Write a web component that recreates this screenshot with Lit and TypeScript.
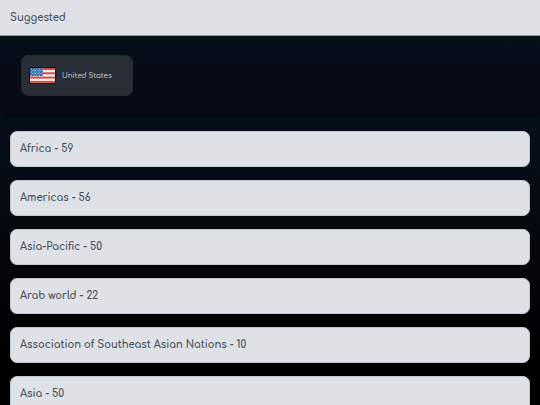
import { LitElement, html, svg, css } from "lit";
import { customElement, property } from "lit/decorators.js";

@customElement("us-flag")
class UsFlag extends LitElement {
  static styles = css`
    :host {
      display: flex;
    }
    .flag {
      display: block;
      width: 27px;
      height: 17px;
    }
  `;

  render() {
    const stripes = [0, 2, 4, 6];
    const stars = [];
    for (let row = 0; row < 5; row++) {
      const shift = row % 2;
      for (let col = 0; col < 5 - shift; col++) {
        stars.push(svg`<circle cx=${2.4 + shift * 1.4 + col * 2.7} cy=${2.1 + row * 1.5} r="0.6" fill="#dbe8f5"></circle>`);
      }
    }
    return html`
      <svg class="flag" viewBox="0 0 27 17" aria-hidden="true">
        <rect width="27" height="17" rx="1" fill="#1b0d12"></rect>
        <rect x="1" y="1" width="25" height="15" fill="#f4f1ee"></rect>
        ${stripes.map((i) => svg`<rect x="1" y=${1 + i * 2.15} width="25" height="2" fill="#dc4a44"></rect>`)}
        <rect x="1" y="1" width="13" height="8.1" fill="#2e629f"></rect>
        ${stars}
      </svg>
    `;
  }
}

@customElement("region-panel")
class RegionPanel extends LitElement {
  @property() name = "";
  @property({ type: Number }) count = 0;

  static styles = css`
    :host {
      display: block;
    }
    .heading {
      margin: 0;
    }
    .toggle {
      display: block;
      width: 100%;
      padding: 8px 9px 9px;
      border: 1px solid #c3c8ce;
      border-radius: 7px;
      background: #dee2e6;
      color: #495057;
      font: 700 10px/17px Comfortaa, Quicksand, Lato, sans-serif;
      text-align: left;
      cursor: pointer;
    }
  `;

  render() {
    return html`
      <h2 class="heading">
        <button class="toggle" type="button" aria-expanded="false">${this.name} - ${this.count}</button>
      </h2>
    `;
  }
}

@customElement("app-root")
class AppRoot extends LitElement {
  regions = [
    { name: "Africa", count: 59 },
    { name: "Americas", count: 56 },
    { name: "Asia-Pacific", count: 50 },
    { name: "Arab world", count: 22 },
    { name: "Association of Southeast Asian Nations", count: 10 },
    { name: "Asia", count: 50 },
  ];

  static styles = css`
    :host {
      display: block;
      box-sizing: border-box;
      height: 100vh;
      overflow: hidden;
      background: linear-gradient(#03111b, #070d17 40%, #000000 88%);
      font-family: Comfortaa, Quicksand, Lato, sans-serif;
    }
    .title {
      margin: 0;
      padding: 9px 10px;
      border-bottom: 1px solid #8e969d;
      background: #dee2e6;
      color: #495057;
      font-size: 10px;
      font-weight: 700;
      line-height: 17px;
    }
    .suggested {
      padding: 19px 21px 22px;
      border-radius: 0 0 6px 6px;
      background: linear-gradient(#04101a, #070b16 50%, #060912);
    }
    .country {
      display: inline-flex;
      align-items: center;
      gap: 6px;
      height: 41px;
      padding: 0 20px 0 7px;
      border: 1px solid #24282f;
      border-radius: 7px;
      background: #292d35;
      color: #ced4da;
      font: 500 7px/12px Comfortaa, Quicksand, Lato, sans-serif;
      vertical-align: top;
      cursor: pointer;
    }
    .regions {
      display: grid;
      gap: 13px;
      padding: 13px 10px;
    }
  `;

  render() {
    return html`
      <h2 class="title">Suggested</h2>
      <section class="suggested">
        <button class="country" type="button">
          <us-flag></us-flag>
          <span>United States</span>
        </button>
      </section>
      <main class="regions">
        ${this.regions.map((r) => html`<region-panel .name=${r.name} .count=${r.count}></region-panel>`)}
      </main>
    `;
  }
}
